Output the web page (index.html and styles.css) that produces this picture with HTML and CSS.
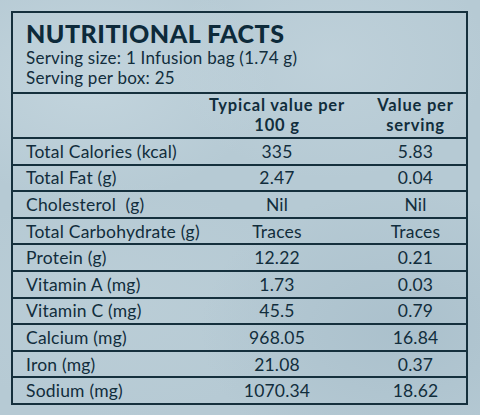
FILE: index.html
```html
<!DOCTYPE html>
<html lang="en">
<head>
<meta charset="utf-8">
<title>Nutritional Facts</title>
<link rel="stylesheet" href="styles.css">
</head>
<body>
<div class="label">
  <div class="head">
    <h1 class="title">NUTRITIONAL FACTS</h1>
    <p class="serving">Serving size: 1 Infusion bag (1.74 g)</p>
    <p class="serving">Serving per box: 25</p>
  </div>
  <div class="row row-head">
    <div class="cell name"></div>
    <div class="cell val"><div class="line">Typical value per</div><div class="line">100 g</div></div>
    <div class="cell val"><div class="line">Value per</div><div class="line">serving</div></div>
  </div>
  <div class="row"><div class="cell name">Total Calories (kcal)</div><div class="cell val">335</div><div class="cell val">5.83</div></div>
  <div class="row"><div class="cell name">Total Fat (g)</div><div class="cell val">2.47</div><div class="cell val">0.04</div></div>
  <div class="row"><div class="cell name">Cholesterol&nbsp; (g)</div><div class="cell val">Nil</div><div class="cell val">Nil</div></div>
  <div class="row"><div class="cell name">Total Carbohydrate (g)</div><div class="cell val">Traces</div><div class="cell val">Traces</div></div>
  <div class="row"><div class="cell name">Protein (g)</div><div class="cell val">12.22</div><div class="cell val">0.21</div></div>
  <div class="row"><div class="cell name">Vitamin A (mg)</div><div class="cell val">1.73</div><div class="cell val">0.03</div></div>
  <div class="row"><div class="cell name">Vitamin C (mg)</div><div class="cell val">45.5</div><div class="cell val">0.79</div></div>
  <div class="row"><div class="cell name">Calcium (mg)</div><div class="cell val">968.05</div><div class="cell val">16.84</div></div>
  <div class="row"><div class="cell name">Iron (mg)</div><div class="cell val">21.08</div><div class="cell val">0.37</div></div>
  <div class="row"><div class="cell name">Sodium (mg)</div><div class="cell val">1070.34</div><div class="cell val">18.62</div></div>
</div>
</body>
</html>
```
FILE: styles.css
```css
html, body {
  margin: 0;
  padding: 0;
}
body {
  width: 480px;
  height: 415px;
  overflow: hidden;
  background-color: #b6cad4;
  background-image:
    radial-gradient(ellipse 180px 120px at 90px 80px, rgba(210,225,232,0.45), transparent),
    radial-gradient(ellipse 200px 140px at 400px 330px, rgba(150,175,190,0.35), transparent),
    radial-gradient(ellipse 160px 120px at 330px 60px, rgba(205,220,228,0.35), transparent),
    radial-gradient(ellipse 180px 120px at 120px 300px, rgba(195,212,220,0.35), transparent);
  font-family: "Lato", "Open Sans", sans-serif;
  color: #112d3c;
  padding: 11px 0 0 11px;
  box-sizing: border-box;
}
.label {
  width: 457px;
  height: 394px;
  border: 2px solid #15303d;
  box-sizing: border-box;
  display: flex;
  flex-direction: column;
}
.head {
  height: 79px;
  padding: 5px 0 0 13px;
  box-sizing: border-box;
}
.title {
  margin: 0;
  font-size: 25px;
  font-weight: 900;
  line-height: 30px;
  letter-spacing: 0.5px;
  color: #0d2a3a;
}
.serving {
  margin: 0;
  font-size: 17px;
  line-height: 20.4px;
  letter-spacing: 0.25px;
  white-space: nowrap;
}
.row {
  display: grid;
  grid-template-columns: 176px 176px 1fr;
  border-top: 2px solid #15303d;
  height: 26.6px;
  box-sizing: border-box;
  align-items: center;
}
.row-head {
  height: 45px;
  font-weight: 700;
}
.cell {
  font-size: 17.5px;
  letter-spacing: 0.2px;
  white-space: nowrap;
}
.row-head .cell {
  font-size: 16.5px;
  letter-spacing: 0.8px;
}
.line {
  line-height: 19.8px;
  height: 19.8px;
}
.name {
  padding-left: 13px;
}
.val {
  text-align: center;
}
```
